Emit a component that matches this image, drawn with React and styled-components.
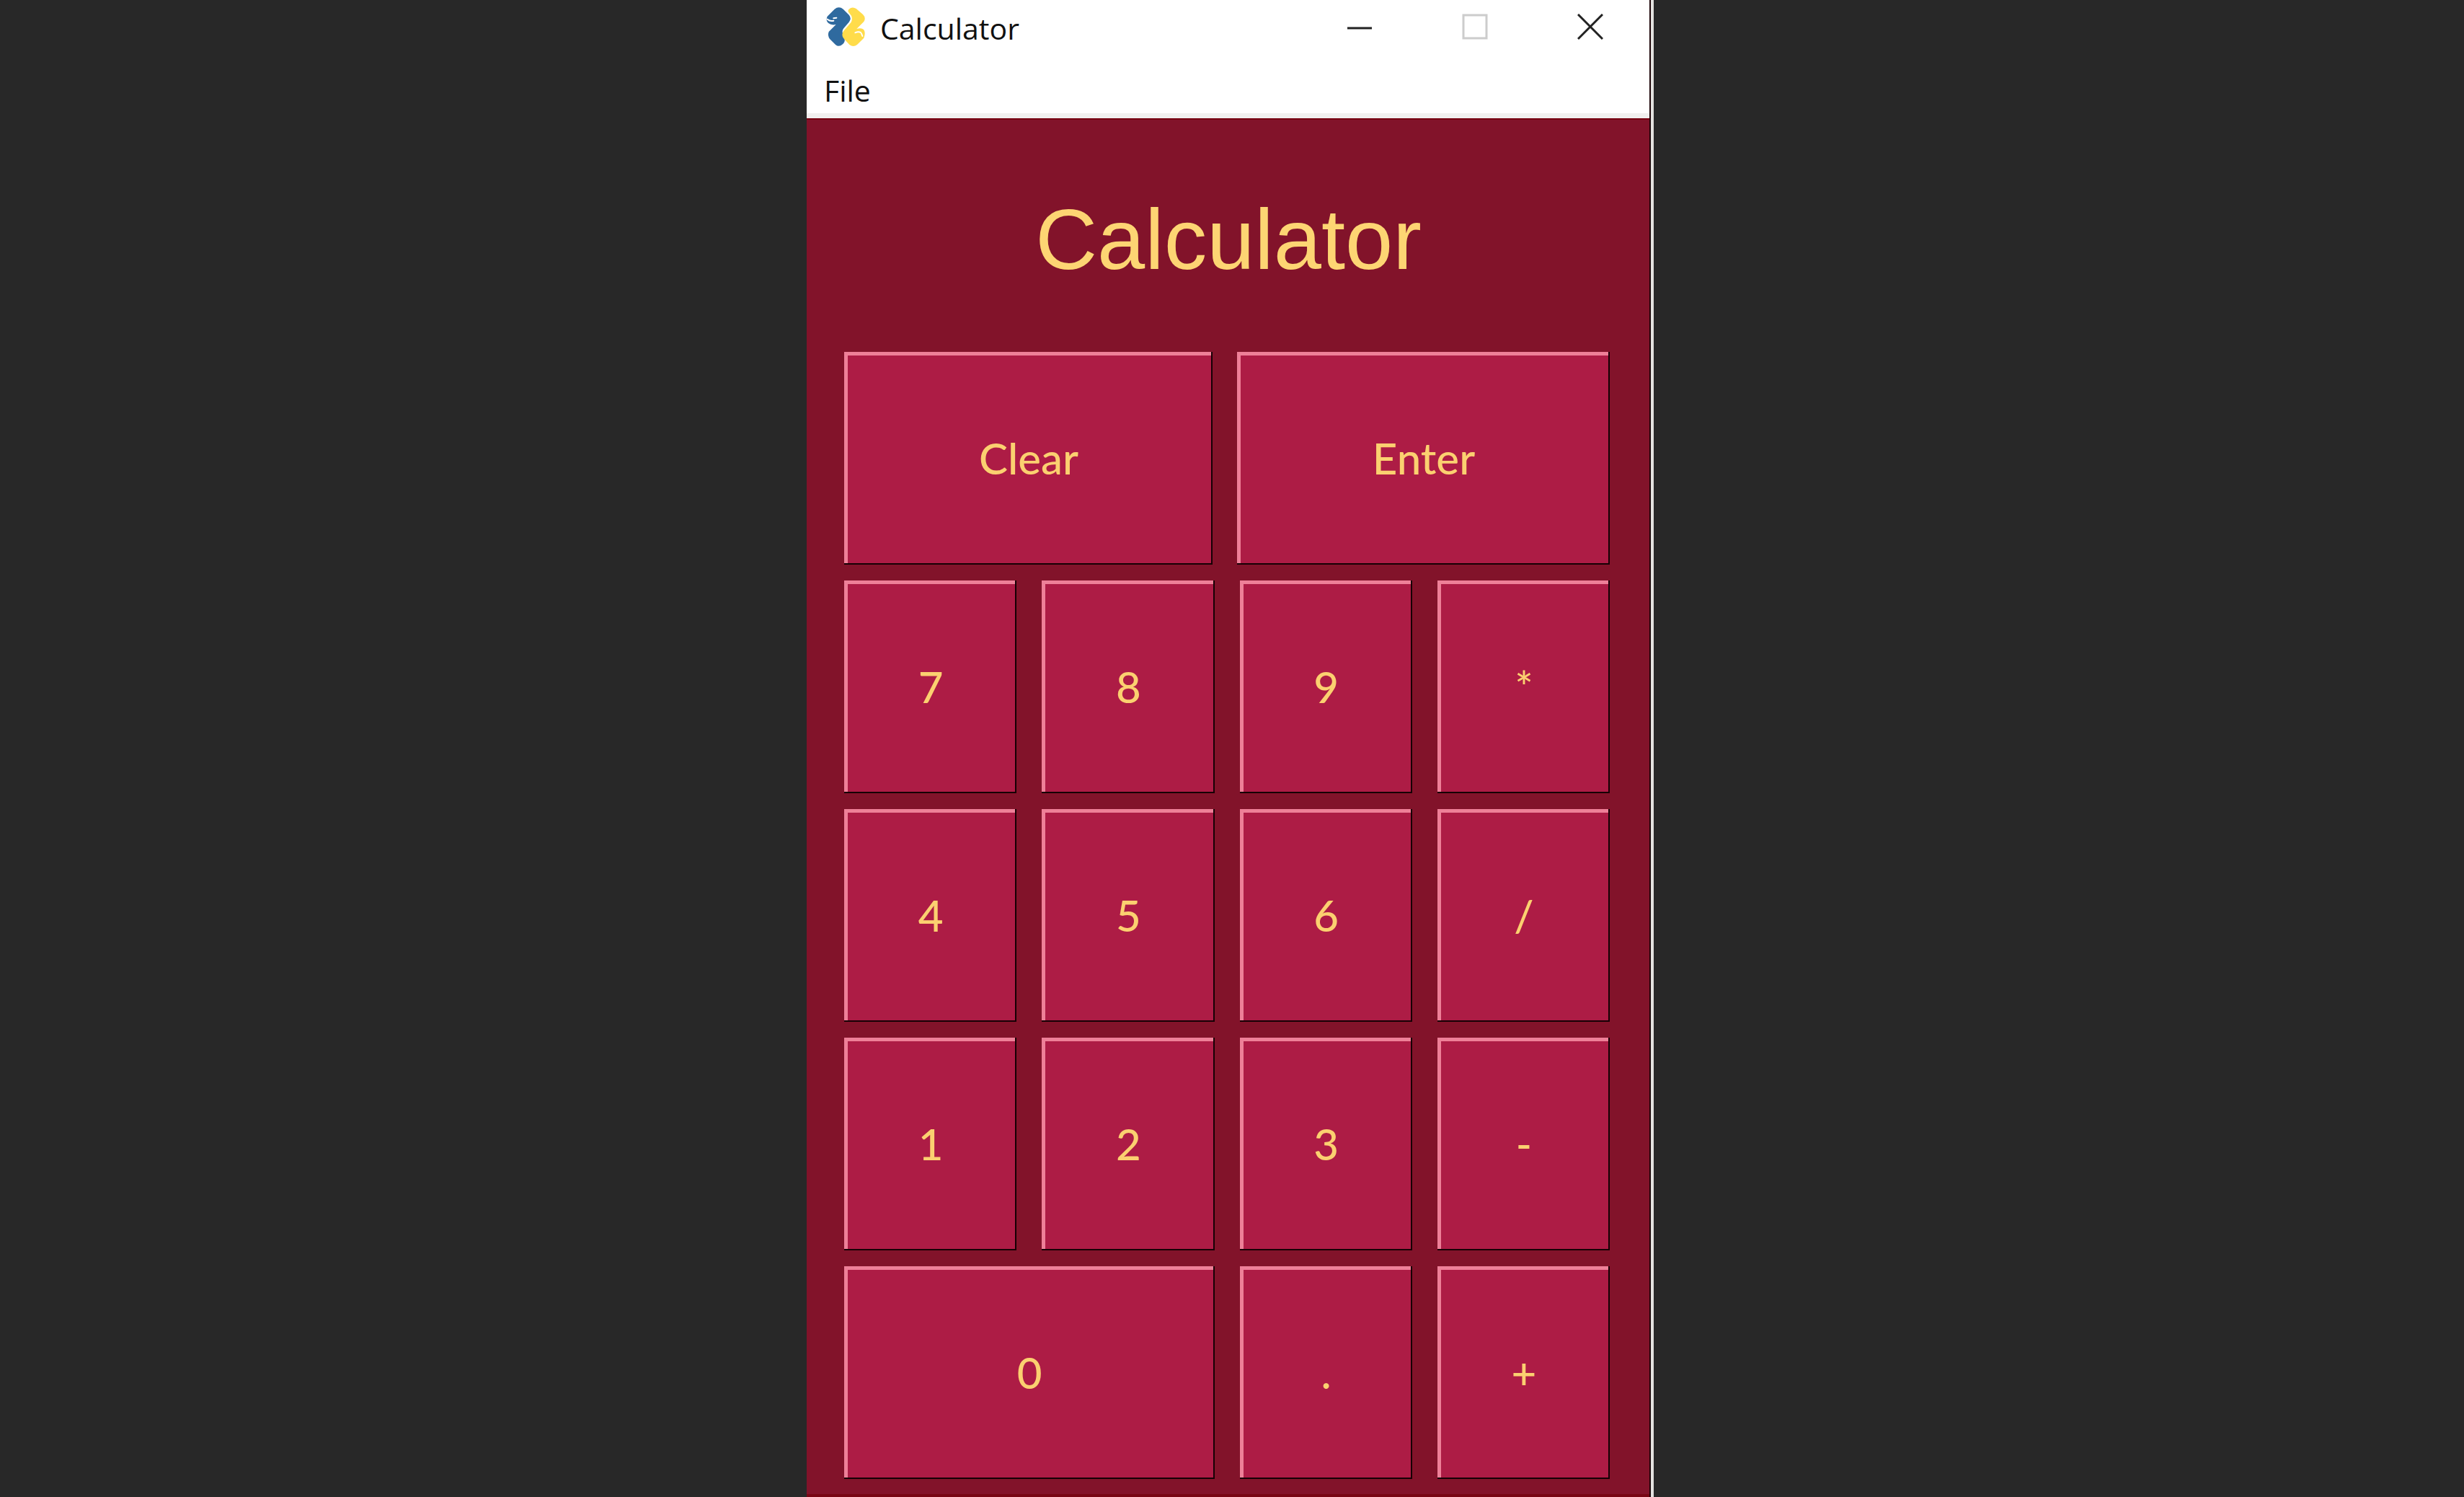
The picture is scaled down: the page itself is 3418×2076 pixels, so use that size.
import React from "react";
import styled, { createGlobalStyle } from "styled-components";

const GlobalStyle = createGlobalStyle`
  * { box-sizing: border-box; }
  body { margin: 0; background: #282828; }
`;

const Desktop = styled.div`
  display: flex;
  justify-content: center;
  padding-right: 5px;
  min-height: 100vh;
`;

const Window = styled.main`
  width: 1175px;
  max-width: 100%;
  display: flex;
  flex-direction: column;
  background: #82132a;
  border-right: 4px solid #e4e2e0;
`;

const Frame = styled.div`
  flex: 1;
  display: flex;
  flex-direction: column;
  border-right: 2px solid #1c0407;
`;

const TitleBar = styled.header`
  height: 88px;
  padding: 0 2px 14px 26px;
  display: flex;
  align-items: center;
  gap: 20px;
  background: #fff;
  color: #111;
  font: 41px/60px "Open Sans", "Noto Sans", sans-serif;
`;

const TitleText = styled.span`
  flex: 1;
  padding-top: 4px;
`;

const WindowControls = styled.div`
  display: flex;
`;

const ControlButton = styled.button`
  width: 160px;
  height: 72px;
  padding: 0;
  display: grid;
  place-items: center;
  border: 0;
  background: none;
  color: ${(p) => (p.disabled ? "#ccc" : "#222")};

  svg {
    width: 36px;
    height: 36px;
    fill: none;
    stroke: currentColor;
    stroke-width: 3;
  }
`;

const MenuBar = styled.nav`
  height: 76px;
  padding-left: 20px;
  display: flex;
  align-items: center;
  background: #fff;
  border-bottom: 7px solid #f1f0ef;
`;

const MenuButton = styled.button`
  padding: 4px 4px 0;
  border: 0;
  background: none;
  color: #111;
  font: 41px/60px "Open Sans", "Noto Sans", sans-serif;
`;

const Body = styled.section`
  flex: 1;
  padding: 0 55px 20px 52px;
  border-top: 2px solid #760010;
  border-bottom: 4px solid #780614;
`;

const Heading = styled.h1`
  margin: 0;
  padding: 98px 0 88px 4px;
  color: #fdd573;
  font: 400 119px/136px "Liberation Sans", Arial, sans-serif;
  text-align: center;
`;

const Keypad = styled.div`
  display: flex;
  flex-direction: column;
  gap: 22px;
`;

const ActionRow = styled.div`
  display: grid;
  grid-template-columns: 511fr 517fr;
  gap: 34px;
`;

const KeyGrid = styled.div`
  display: grid;
  grid-template-columns: repeat(4, 1fr);
  gap: 22px 35px;
`;

const Key = styled.button`
  grid-column: span ${(p) => p.$span || 1};
  height: 295px;
  padding: 5px 0 4px 3px;
  border: 0 solid #160004;
  border-width: 0 2px 2px 0;
  box-shadow: inset 5px 5px 0 #ee8098;
  background: #ad1c45;
  color: #fbd070;
  font: 500 60px/76px Lato, Carlito, sans-serif;
`;

const actions = ["Clear", "Enter"];
const keys = ["7", "8", "9", "*", "4", "5", "6", "/", "1", "2", "3", "-", "0", ".", "+"];

function Logo() {
  return (
    <svg width="56" height="58" viewBox="0 0 168 174" aria-hidden="true">
      <path
        d="M8 44 L38 14 Q56 0 74 14 L98 38 Q110 52 98 68 L76 94 Q68 104 72 116 L80 140 Q82 150 72 160 Q56 174 42 162 L18 138 Q8 124 14 108 L44 78 Q24 82 12 72 Q0 60 8 44Z"
        fill="#2f6a9f"
      />
      <path
        d="M98 14 Q112 2 128 12 L156 36 Q170 50 160 66 L130 96 Q150 90 160 100 Q168 114 160 134 L132 162 Q116 174 100 162 L76 136 Q64 120 76 104 L106 70 Q114 56 108 42 L96 26 Q92 20 98 14Z"
        fill="#ffdc4a"
      />
      <path
        d="M8 56 Q20 66 34 62 M34 52 L46 50 M124 112 Q138 106 148 112 M150 116 L154 126"
        stroke="#fff"
        strokeWidth="6"
        strokeLinecap="round"
        fill="none"
      />
    </svg>
  );
}

export default function App() {
  return (
    <>
      <GlobalStyle />
      <Desktop>
        <Window>
          <Frame>
            <TitleBar>
              <Logo />
              <TitleText>Calculator</TitleText>
              <WindowControls>
                <ControlButton aria-label="Minimize">
                  <svg viewBox="0 0 36 36"><path d="M1 20H35" /></svg>
                </ControlButton>
                <ControlButton aria-label="Maximize" disabled>
                  <svg viewBox="0 0 36 36"><path d="M2 2H34V34H2Z" /></svg>
                </ControlButton>
                <ControlButton aria-label="Close">
                  <svg viewBox="0 0 36 36"><path d="M1 1L35 35M35 1L1 35" /></svg>
                </ControlButton>
              </WindowControls>
            </TitleBar>
            <MenuBar>
              <MenuButton>File</MenuButton>
            </MenuBar>
            <Body>
              <Heading>Calculator</Heading>
              <Keypad>
                <ActionRow>
                  {actions.map((label) => (
                    <Key key={label}>{label}</Key>
                  ))}
                </ActionRow>
                <KeyGrid>
                  {keys.map((label) => (
                    <Key key={label} $span={label === "0" ? 2 : 1}>{label}</Key>
                  ))}
                </KeyGrid>
              </Keypad>
            </Body>
          </Frame>
        </Window>
      </Desktop>
    </>
  );
}
